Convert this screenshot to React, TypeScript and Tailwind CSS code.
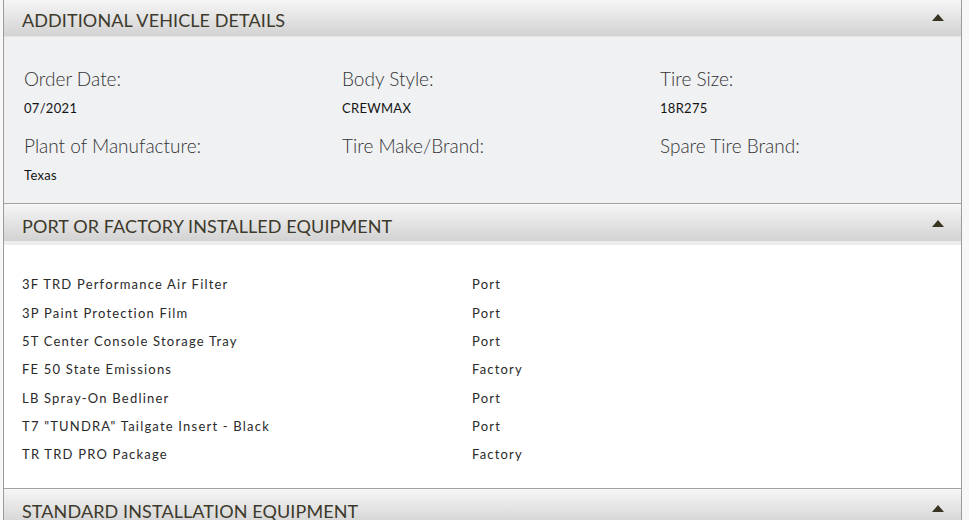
const details = [
  { label: 'Order Date:', value: '07/2021' },
  { label: 'Body Style:', value: 'CREWMAX' },
  { label: 'Tire Size:', value: '18R275' },
  { label: 'Plant of Manufacture:', value: 'Texas' },
  { label: 'Tire Make/Brand:', value: '' },
  { label: 'Spare Tire Brand:', value: '' }
];

const equipment = [
  { name: '3F TRD Performance Air Filter', type: 'Port' },
  { name: '3P Paint Protection Film', type: 'Port' },
  { name: '5T Center Console Storage Tray', type: 'Port' },
  { name: 'FE 50 State Emissions', type: 'Factory' },
  { name: 'LB Spray-On Bedliner', type: 'Port' },
  { name: 'T7 "TUNDRA" Tailgate Insert - Black', type: 'Port' },
  { name: 'TR TRD PRO Package', type: 'Factory' }
];

const Caret = () => (
  <svg width="12" height="7" viewBox="0 0 12 7" className="mr-[17px] mb-[6px]">
    <path d="M0 7 L6 0 L12 7 Z" fill="#3a3522" />
  </svg>
);

const SectionHeader = ({ title, first }: { title: string; first?: boolean }) => (
  <div
    className={`flex items-center justify-between bg-gradient-to-b from-[#f6f6f6] to-[#d2d2d2] pl-[18px] ${
      first ? 'h-[36px] pt-[8px] pb-[4px]' : 'h-[38px] pt-[12px] pb-[4px] border-t border-[#a3a3a3]'
    }`}
  >
    <span className="text-[18px] uppercase text-[#3d392b] tracking-[0.1px]">{title}</span>
    <Caret />
  </div>
);

export default function App() {
  return (
    <div className="w-[969px] h-[520px] overflow-hidden bg-[#f7f7f7] pl-[3px] pr-[7px]" style={{ fontFamily: 'Lato, "Open Sans", sans-serif' }}>
      <div className="h-full border-x border-[#9c9c9c] bg-white">
        <SectionHeader title="Additional Vehicle Details" first />
        <div className="bg-[#f0f1f3] px-5 pt-[30px] pb-[18px] border-t border-[#e4e4e4]">
          <div className="grid grid-cols-[318px_318px_1fr] gap-y-[16px]">
            {details.map((d) => (
              <div key={d.label} className="flex flex-col">
                <span className="text-[19px] font-light leading-[24px] text-[#333333]">{d.label}</span>
                <span className="mt-[7px] h-[20px] text-[13px] leading-[20px] text-[#141414] tracking-[0.3px]">{d.value}</span>
              </div>
            ))}
          </div>
        </div>
        <SectionHeader title="Port or Factory Installed Equipment" />
        <div className="h-[4px] bg-[#ededed]" />
        <div className="pl-[18px] pt-[26px] pb-[19px]">
          {equipment.map((e) => (
            <div key={e.name} className="grid grid-cols-[450px_1fr] h-[28.33px] items-center text-[13px] text-[#2a2a2a] tracking-[1.2px]">
              <span>{e.name}</span>
              <span>{e.type}</span>
            </div>
          ))}
        </div>
        <SectionHeader title="Standard Installation Equipment" />
      </div>
    </div>
  );
}
